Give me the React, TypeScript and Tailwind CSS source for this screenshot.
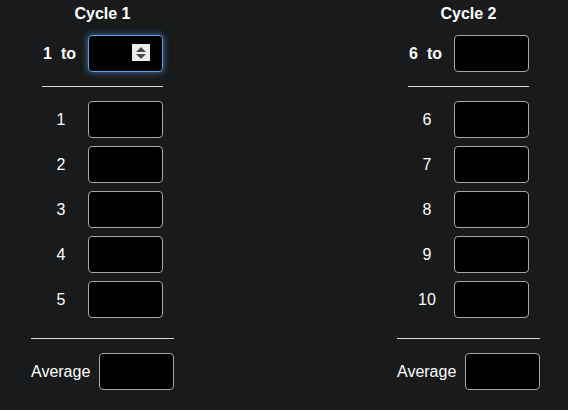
import React from "react";

const boxCls =
  "w-[75px] h-[37px] bg-black border border-[#a8a8a8] rounded-[4px] text-white outline-none px-2";

function Spinner() {
  return (
    <div className="absolute right-[13px] top-[9px] w-[18px] h-[17px] bg-[#ececec] flex flex-col items-center justify-center gap-[2px]">
      <svg width="10" height="5" viewBox="0 0 10 5">
        <polygon points="5,0 10,5 0,5" fill="#4a4a4a" />
      </svg>
      <svg width="10" height="5" viewBox="0 0 10 5">
        <polygon points="0,0 10,0 5,5" fill="#4a4a4a" />
      </svg>
    </div>
  );
}

function Cycle({ title, start, focused }: { title: string; start: number; focused?: boolean }) {
  const rows = [0, 1, 2, 3, 4].map((i) => start + i);
  return (
    <div className="w-[143px] flex flex-col items-center">
      <div className="h-[30px] pt-[4px] text-[16px] font-bold leading-[20px]">{title}</div>
      <div className="w-[121px] flex flex-col">
        <div className="flex items-center h-[37px] mt-[5px]">
          <div className="w-[38px] pl-[1px] font-bold text-[16px] flex gap-[9px] justify-start">
            <span>{start}</span>
            <span>to</span>
          </div>
          <div className="ml-[8px] relative">
            {focused ? (
              <>
                <input
                  type="text"
                  readOnly
                  className="w-[75px] h-[37px] bg-black border border-[#5a9fe3] rounded-[4px] outline-none shadow-[0_0_6px_1px_rgba(90,159,227,0.55)]"
                />
                <Spinner />
              </>
            ) : (
              <input type="text" className={boxCls} />
            )}
          </div>
        </div>
        <div className="h-px bg-[#d6d6d6] mt-[14px] mb-[14px]" />
        <div className="flex flex-col gap-[8px]">
          {rows.map((n) => (
            <div key={n} className="flex items-center h-[37px]">
              <div className="w-[38px] text-center text-[16px] pt-[1px]">{n}</div>
              <input type="text" className={"ml-[8px] " + boxCls} />
            </div>
          ))}
        </div>
      </div>
      <div className="w-[143px] h-px bg-[#d6d6d6] mt-[20px]" />
      <div className="w-[143px] flex items-center justify-between mt-[14px]">
        <span className="text-[16px]">Average</span>
        <input type="text" className={boxCls} />
      </div>
    </div>
  );
}

export default function App() {
  return (
    <div
      className="w-[568px] h-[410px] bg-[#181a1b] text-white overflow-hidden flex pl-[31px] gap-[223px]"
      style={{ fontFamily: '"Liberation Sans", Arial, sans-serif' }}
    >
      <Cycle title="Cycle 1" start={1} focused />
      <Cycle title="Cycle 2" start={6} />
    </div>
  );
}
